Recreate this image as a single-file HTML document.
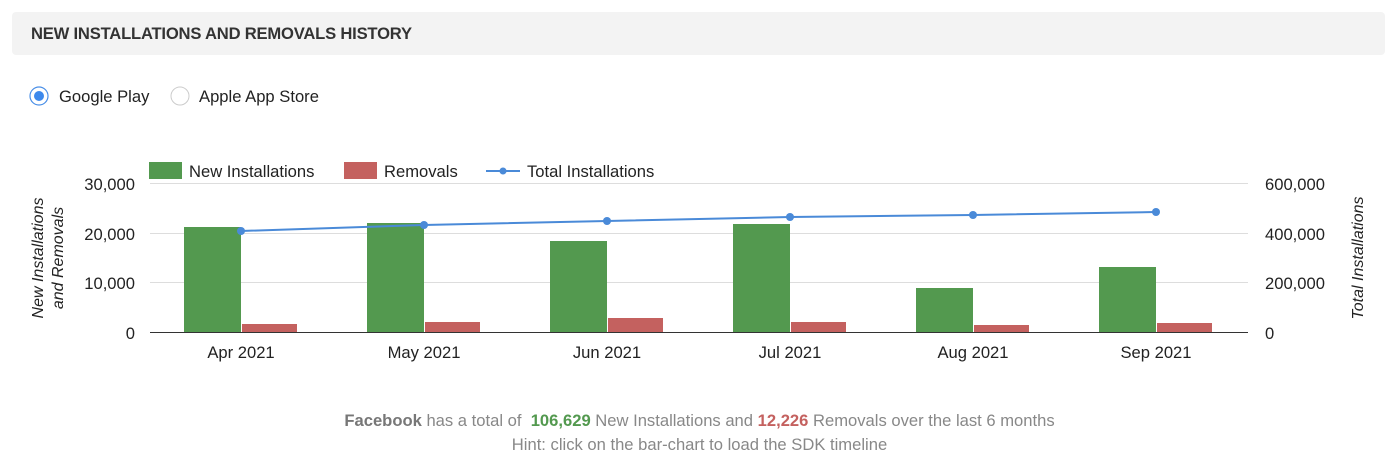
<!DOCTYPE html>
<html><head><style>
body{margin:0;width:1399px;height:471px;background:#fff;font-family:"Liberation Sans",Arial,sans-serif;overflow:hidden;position:relative}
.hdr{position:absolute;left:12px;top:12px;width:1373px;height:43px;background:#f3f3f3;border-radius:4px}
.hdr span{position:absolute;left:19px;top:12px;font-size:16.6px;font-weight:bold;color:#333;letter-spacing:-0.2px}
.ft{position:absolute;left:0;width:1399px;text-align:center;font-size:16.6px;color:#888}
</style></head><body>
<div class="hdr"><span>NEW INSTALLATIONS AND REMOVALS HISTORY</span></div>
<svg width="1399" height="471" style="position:absolute;left:0;top:0" font-family="Liberation Sans, Arial, sans-serif">
<circle cx="39" cy="96" r="9" fill="#fff" stroke="#4a8fe7" stroke-width="1.2"/>
<circle cx="39" cy="96" r="5" fill="#3d89ec"/>
<text x="59" y="102" font-size="16.6" fill="#222">Google Play</text>
<circle cx="180" cy="96" r="9" fill="#fff" stroke="#ccc" stroke-width="1"/>
<text x="199" y="102" font-size="16.6" fill="#222">Apple App Store</text>
<g stroke="#ddd" stroke-width="1"><line x1="150" y1="183.5" x2="1248" y2="183.5"/><line x1="150" y1="233.5" x2="1248" y2="233.5"/><line x1="150" y1="282.5" x2="1248" y2="282.5"/></g>
<line x1="150" y1="332.5" x2="1248" y2="332.5" stroke="#333"/>
<rect x="149" y="162" width="33" height="17" fill="#53994f"/>
<text x="189" y="177" font-size="16.6" fill="#222">New Installations</text>
<rect x="344" y="162" width="33" height="17" fill="#c4615f"/>
<text x="384" y="177" font-size="16.6" fill="#222">Removals</text>
<line x1="486" y1="171" x2="520" y2="171" stroke="#4a8ad8" stroke-width="2"/><circle cx="503" cy="171" r="3.5" fill="#4a8ad8"/>
<text x="527" y="177" font-size="16.6" fill="#222">Total Installations</text>
<g font-size="16.6" fill="#222" text-anchor="end">
<text x="135" y="190">30,000</text><text x="135" y="240">20,000</text><text x="135" y="289">10,000</text><text x="135" y="339">0</text></g>
<g font-size="16.6" fill="#222" text-anchor="start">
<text x="1265" y="190">600,000</text><text x="1265" y="240">400,000</text><text x="1265" y="289">200,000</text><text x="1265" y="339">0</text></g>
<text transform="translate(43,258) rotate(-90)" font-size="16" font-style="italic" fill="#222" text-anchor="middle">New Installations</text>
<text transform="translate(63,258) rotate(-90)" font-size="16" font-style="italic" fill="#222" text-anchor="middle">and Removals</text>
<text transform="translate(1363,258) rotate(-90)" font-size="16" font-style="italic" fill="#222" text-anchor="middle">Total Installations</text>
<g fill="#53994f">
<rect x="184" y="227" width="57" height="105"/><rect x="367" y="223" width="57" height="109"/><rect x="550" y="241" width="57" height="91"/><rect x="733" y="224" width="57" height="108"/><rect x="916" y="288" width="57" height="44"/><rect x="1099" y="267" width="57" height="65"/></g>
<g fill="#c4615f">
<rect x="242" y="324" width="55" height="8"/><rect x="425" y="322" width="55" height="10"/><rect x="608" y="318" width="55" height="14"/><rect x="791" y="322" width="55" height="10"/><rect x="974" y="325" width="55" height="7"/><rect x="1157" y="323" width="55" height="9"/></g>
<polyline points="241,231 424,225 607,221 790,217 973,215 1156,212" fill="none" stroke="#4a8ad8" stroke-width="2"/>
<g fill="#4a8ad8"><circle cx="241" cy="231" r="4"/><circle cx="424" cy="225" r="4"/><circle cx="607" cy="221" r="4"/><circle cx="790" cy="217" r="4"/><circle cx="973" cy="215" r="4"/><circle cx="1156" cy="212" r="4"/></g>
<g font-size="16.6" fill="#222" text-anchor="middle">
<text x="241" y="358">Apr 2021</text><text x="424" y="358">May 2021</text><text x="607" y="358">Jun 2021</text><text x="790" y="358">Jul 2021</text><text x="973" y="358">Aug 2021</text><text x="1156" y="358">Sep 2021</text></g>
</svg>
<div class="ft" style="top:411px"><b style="color:#777">Facebook</b> has a total of &nbsp;<b style="color:#53994f">106,629</b> New Installations and <b style="color:#c4615f">12,226</b> Removals over the last 6 months</div>
<div class="ft" style="top:435px">Hint: click on the bar-chart to load the SDK timeline</div>
</body></html>
